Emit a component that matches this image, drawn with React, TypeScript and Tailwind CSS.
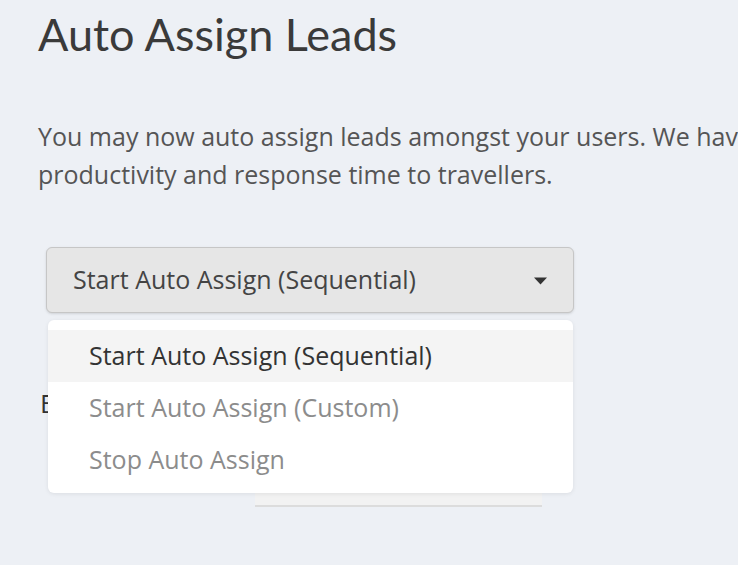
import React from 'react';

const options = [
  { label: 'Start Auto Assign (Sequential)', active: true },
  { label: 'Start Auto Assign (Custom)', active: false },
  { label: 'Stop Auto Assign', active: false },
];

const App: React.FC = () => {
  return (
    <div
      className="w-[738px] h-[565px] overflow-hidden bg-[#edf0f5] pl-[38px] text-[#3b3b3b]"
      style={{ fontFamily: '"Open Sans", Lato, sans-serif' }}
    >
      <h1
        className="pt-[8px] text-[45px] leading-[52px] font-normal text-[#3a3a3a]"
        style={{ fontFamily: 'Lato, "Open Sans", sans-serif' }}
      >
        Auto Assign Leads
      </h1>

      <p className="mt-[57px] text-[25px] leading-[38px] text-[#555]">
        <span className="block whitespace-nowrap">
          You may now auto assign leads amongst your users. We have found this improves
        </span>
        <span className="block whitespace-nowrap">productivity and response time to travellers.</span>
      </p>

      <div className="relative mt-[54px] w-[540px]">
        <div className="ml-[8px] flex h-[66px] w-[528px] items-center justify-between rounded-md border border-[#c6c6c6] bg-[#e6e6e6] pl-[26px] pr-[25px] shadow-sm">
          <span className="text-[25px] text-[#444]">Start Auto Assign (Sequential)</span>
          <svg width="15" height="8" viewBox="0 0 15 8" className="mt-[1px]">
            <path d="M1 0.5 L14 0.5 L7.5 7.5 Z" fill="#333" />
          </svg>
        </div>

        <div className="ml-[2px] mt-[72px] flex items-center">
          <span className="text-[26px] leading-[36px] text-[#333]">Enable for users</span>
        </div>
        <div className="ml-[217px] mt-[45px] h-[41px] w-[287px] border-b-2 border-[#dcdcdc] bg-[#f2f2f2]" />

        <div className="absolute left-[10px] top-[73px] w-[525px] rounded-md bg-white pt-[10px] pb-[7px] shadow-[0_1px_4px_rgba(0,0,0,0.08)]">
          {options.map((o) => (
            <div
              key={o.label}
              className={
                o.active
                  ? 'flex h-[52px] items-center bg-[#f4f4f4] pl-[41px] text-[25px] text-[#333]'
                  : 'flex h-[52px] items-center pl-[41px] text-[25px] text-[#8c8c8c]'
              }
            >
              {o.label}
            </div>
          ))}
        </div>
      </div>
    </div>
  );
};

export default App;
